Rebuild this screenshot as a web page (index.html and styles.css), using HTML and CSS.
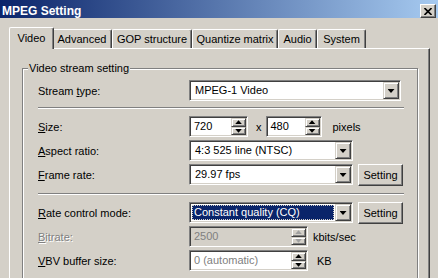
FILE: index.html
```html
<!DOCTYPE html>
<html>

<head>
    <meta charset='utf-8'>
    <title>MPEG Setting</title>
    <meta name='viewport' content='width=device-width, initial-scale=1'>
    <link rel="stylesheet" href="styles.css">
</head>

<body>
    <div class="dialog">
        <div class="titlebar">
            <span class="title">MPEG Setting</span>
            <span class="close-btn">
                <svg width="8" height="7" viewBox="0 0 8 7">
                    <path d="M0.5 0 L7.5 7 M7.5 0 L0.5 7" stroke="#000" stroke-width="1.6" fill="none" />
                </svg>
            </span>
        </div>

        <div class="tabs">
            <div class="tab active tab-video">Video</div>
            <div class="tab tab-advanced">Advanced</div>
            <div class="tab tab-gop">GOP structure</div>
            <div class="tab tab-quant">Quantize matrix</div>
            <div class="tab tab-audio">Audio</div>
            <div class="tab tab-system">System</div>
        </div>

        <div class="panel">
            <div class="group">
                <div class="group-title">Video stream setting</div>

                <div class="row">
                    <label class="label">Stream <u>t</u>ype:</label>
                    <div class="combo sunken combo-wide">
                        <span class="combo-text">MPEG-1 Video</span>
                        <span class="drop raised"><i class="tri-down"></i></span>
                    </div>
                </div>

                <div class="sep"></div>

                <div class="row">
                    <label class="label"><u>S</u>ize:</label>
                    <div class="spin sunken spin-720">
                        <span class="spin-text">720</span>
                        <span class="updown">
                            <span class="raised"><i class="tri-up"></i></span>
                            <span class="raised"><i class="tri-dn"></i></span>
                        </span>
                    </div>
                    <span class="times">x</span>
                    <div class="spin sunken spin-480">
                        <span class="spin-text">480</span>
                        <span class="updown">
                            <span class="raised"><i class="tri-up"></i></span>
                            <span class="raised"><i class="tri-dn"></i></span>
                        </span>
                    </div>
                    <span class="unit unit-pixels">pixels</span>
                </div>
                <div class="row">
                    <label class="label"><u>A</u>spect ratio:</label>
                    <div class="combo sunken combo-mid">
                        <span class="combo-text">4:3 525 line (NTSC)</span>
                        <span class="drop raised"><i class="tri-down"></i></span>
                    </div>
                </div>
                <div class="row">
                    <label class="label"><u>F</u>rame rate:</label>
                    <div class="combo sunken combo-mid">
                        <span class="combo-text">29.97 fps</span>
                        <span class="drop raised"><i class="tri-down"></i></span>
                    </div>
                    <button class="button" type="button">Setting</button>
                </div>

                <div class="sep sep-low"></div>

                <div class="row">
                    <label class="label"><u>R</u>ate control mode:</label>
                    <div class="combo sunken combo-mid">
                        <span class="combo-text selected">Constant quality (CQ)</span>
                        <span class="drop raised"><i class="tri-down"></i></span>
                    </div>
                    <button class="button" type="button">Setting</button>
                </div>
                <div class="row">
                    <label class="label disabled"><u>B</u>itrate:</label>
                    <div class="spin sunken spin-long spin-off">
                        <span class="spin-text">2500</span>
                        <span class="updown">
                            <span class="raised"><i class="tri-up"></i></span>
                            <span class="raised"><i class="tri-dn"></i></span>
                        </span>
                    </div>
                    <span class="unit unit-kbits">kbits/sec</span>
                </div>
                <div class="row">
                    <label class="label"><u>V</u>BV buffer size:</label>
                    <div class="spin sunken spin-long">
                        <span class="spin-text grey">0 (automatic)</span>
                        <span class="updown">
                            <span class="raised"><i class="tri-up"></i></span>
                            <span class="raised"><i class="tri-dn"></i></span>
                        </span>
                    </div>
                    <span class="unit unit-kb">KB</span>
                </div>
            </div>
        </div>
    </div>
</body>

</html>
```

FILE: styles.css
```css
body {
    margin: 0;
    background-color: #d4d0c8;
    font-family: "Liberation Sans", Arial, sans-serif;
    font-size: 11px;
    color: #000;
    overflow: hidden;
}

.dialog {
    width: 438px;
    height: 278px;
    overflow: hidden;
}

/* title bar */
.titlebar {
    height: 18px;
    display: flex;
    justify-content: space-between;
    align-items: flex-start;
    padding: 0 2px;
    background: linear-gradient(to right, #0a246a, #a6caf0);
}

.title {
    margin-top: 4px;
    line-height: 14px;
    font-size: 12px;
    font-weight: bold;
    color: #fff;
}

.close-btn {
    margin-top: 4px;
    width: 16px;
    height: 14px;
    box-sizing: border-box;
    display: flex;
    align-items: center;
    justify-content: center;
    background-color: #d4d0c8;
    border: 1px solid;
    border-color: #fff #404040 #404040 #fff;
    box-shadow: inset -1px -1px #808080;
}

/* tabs */
.tabs {
    display: flex;
    align-items: flex-end;
    height: 19px;
    margin-top: 11px;
    padding-left: 11px;
}

.tab {
    height: 19px;
    box-sizing: border-box;
    padding-top: 3px;
    line-height: 13px;
    text-align: center;
    white-space: nowrap;
    border: 1px solid;
    border-bottom: none;
    border-color: #fff #404040 #fff #fff;
    border-radius: 2px 2px 0 0;
    box-shadow: inset -1px 0 #808080;
    background-color: #d4d0c8;
}

.tab.active {
    position: relative;
    z-index: 1;
    height: 22px;
    margin: 0 -2px -1px;
    padding-top: 4px;
}

.tab-video { width: 45px; }
.tab-advanced { width: 60px; }
.tab-gop { width: 80px; }
.tab-quant { width: 86px; }
.tab-audio { width: 39px; }
.tab-system { width: 49px; }

/* tab page */
.panel {
    width: 421px;
    height: 240px;
    margin-left: 9px;
    box-sizing: border-box;
    border: 1px solid;
    border-color: #fff #404040 #404040 #fff;
    box-shadow: inset -1px 0 #808080;
    padding-top: 19px;
}

.group {
    width: 396px;
    height: 240px;
    margin-left: 12px;
    box-sizing: border-box;
    border: 1px solid #808080;
    box-shadow: inset 1px 1px #fff, 1px 1px #fff;
    padding: 0 13px 0 15px;
}

.group-title {
    display: table;
    margin: -7px 0 0 -10px;
    padding: 0 1px;
    line-height: 13px;
    background-color: #d4d0c8;
}

.group-title + .row {
    margin-top: 5px;
}

.row {
    display: flex;
    align-items: center;
    height: 21px;
}

.row + .row {
    margin-top: 3px;
}

.label {
    width: 151px;
    flex: none;
    white-space: nowrap;
}

.label.disabled {
    color: #808080;
    text-shadow: 1px 1px #fff;
}

.sep {
    border-top: 1px solid #808080;
    border-bottom: 1px solid #fff;
    margin: 6px 0 7px;
}

.sep-low {
    margin-top: 8px;
}

/* 3d borders */
.sunken {
    border: 1px solid;
    border-color: #808080 #fff #fff #808080;
    box-shadow: inset 1px 1px #404040, inset -1px -1px #d4d0c8;
}

.raised {
    box-sizing: border-box;
    border: 1px solid;
    border-color: #d4d0c8 #404040 #404040 #d4d0c8;
    box-shadow: inset 1px 1px #fff, inset -1px -1px #808080;
    background-color: #d4d0c8;
}

/* combo boxes */
.combo {
    display: flex;
    height: 21px;
    box-sizing: border-box;
    padding: 1px;
    background-color: #fff;
}

.combo-wide { width: 212px; }
.combo-mid { width: 164px; }

.combo-text {
    flex: 1;
    padding-left: 4px;
    line-height: 17px;
    white-space: nowrap;
    overflow: hidden;
}

.combo-text.selected {
    margin: 1px;
    padding-left: 2px;
    line-height: 15px;
    color: #fff;
    background-color: #0a246a;
    outline: 1px dotted #d4d0c8;
    outline-offset: -1px;
}

.drop {
    width: 16px;
    height: 17px;
    display: flex;
    align-items: center;
    justify-content: center;
}

.tri-down {
    width: 7px;
    height: 4px;
    margin-top: 1px;
    background-color: #000;
    clip-path: polygon(0 0, 100% 0, 50% 100%);
}

/* spin edits */
.spin {
    display: flex;
    height: 21px;
    box-sizing: border-box;
    padding: 1px;
    background-color: #fff;
}

.spin-720 { width: 59px; }
.spin-480 { width: 56px; }
.spin-long { width: 119px; }

.spin-text {
    flex: 1;
    padding-left: 3px;
    line-height: 17px;
    white-space: nowrap;
}

.spin-text.grey,
.spin-off .spin-text {
    color: #808080;
}

.spin-off {
    background-color: #d4d0c8;
}

.updown {
    width: 15px;
    display: flex;
    flex-direction: column;
}

.updown span {
    flex: 1;
    display: flex;
    align-items: center;
    justify-content: center;
}

.tri-up,
.tri-dn {
    width: 7px;
    height: 4px;
    background-color: #000;
}

.tri-up { clip-path: polygon(50% 0, 100% 100%, 0 100%); }
.tri-dn { clip-path: polygon(0 0, 100% 0, 50% 100%); }

.spin-off .tri-up,
.spin-off .tri-dn {
    background-color: #a0a0a0;
}

.times {
    margin: 0 4px 0 8px;
}

.unit-pixels { margin-left: 11px; }
.unit-kbits { margin-left: 5px; }
.unit-kb { margin-left: 9px; }

/* push button */
.button {
    width: 45px;
    height: 22px;
    margin-left: 5px;
    padding: 0;
    font-family: inherit;
    font-size: 11px;
    color: #000;
    background-color: #d4d0c8;
    border: 1px solid;
    border-color: #fff #404040 #404040 #fff;
    box-shadow: inset -1px -1px #808080;
}
```
